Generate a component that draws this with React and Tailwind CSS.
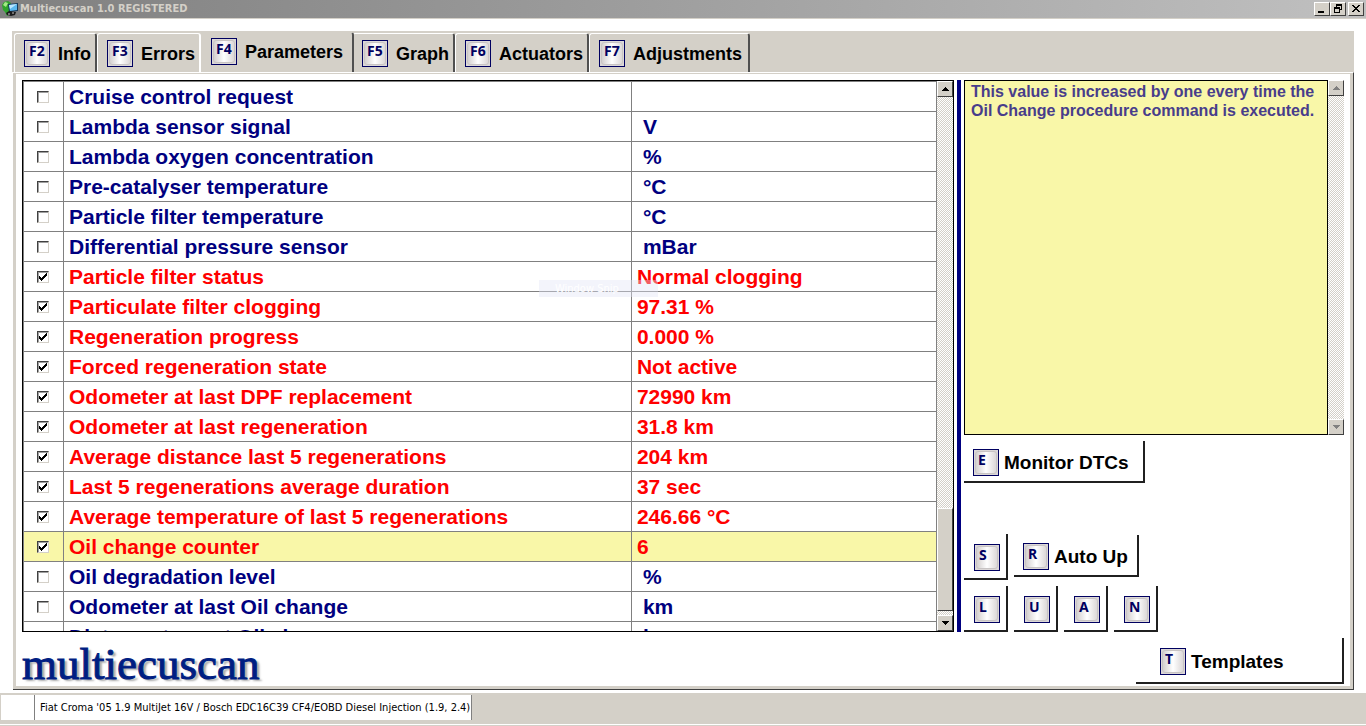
import React, { useState } from 'react';
import clsx from 'clsx';

const TABS = [
  { id: 'F2', label: 'Info', width: 'w-[83px]' },
  { id: 'F3', label: 'Errors', width: 'w-[104px]' },
  { id: 'F4', label: 'Parameters', width: 'w-[153px]' },
  { id: 'F5', label: 'Graph', width: 'w-[103px]' },
  { id: 'F6', label: 'Actuators', width: 'w-[134px]' },
  { id: 'F7', label: 'Adjustments', width: 'w-[161px]' },
];

const PARAMETERS = [
  { name: 'Cruise control request', value: '', on: false },
  { name: 'Lambda sensor signal', value: 'V', on: false },
  { name: 'Lambda oxygen concentration', value: '%', on: false },
  { name: 'Pre-catalyser temperature', value: '°C', on: false },
  { name: 'Particle filter temperature', value: '°C', on: false },
  { name: 'Differential pressure sensor', value: 'mBar', on: false },
  { name: 'Particle filter status', value: 'Normal clogging', on: true },
  { name: 'Particulate filter clogging', value: '97.31 %', on: true },
  { name: 'Regeneration progress', value: '0.000 %', on: true },
  { name: 'Forced regeneration state', value: 'Not active', on: true },
  { name: 'Odometer at last DPF replacement', value: '72990 km', on: true },
  { name: 'Odometer at last regeneration', value: '31.8 km', on: true },
  { name: 'Average distance last 5 regenerations', value: '204 km', on: true },
  { name: 'Last 5 regenerations average duration', value: '37 sec', on: true },
  { name: 'Average temperature of last 5 regenerations', value: '246.66 °C', on: true },
  { name: 'Oil change counter', value: '6', on: true },
  { name: 'Oil degradation level', value: '%', on: false },
  { name: 'Odometer at last Oil change', value: 'km', on: false },
  { name: 'Distance to next Oil change', value: 'km', on: false },
];

const raised = 'bg-[#d4d0c8] border border-t-white border-l-white border-r-[#404040] border-b-[#404040]';

const KeyCap = ({ children }) => (
  <span className='block h-[27px] w-[26px] shrink-0 border border-[#000060] bg-[#dcd8d8] p-px text-left font-["Noto_Sans",sans-serif] font-bold text-[#000060]'>
    <span className="block h-full rounded-[3px] border border-[#c8c4c4] bg-linear-to-r from-[#d4d0d0] via-white to-[#dcd8d8] pl-[2px] text-[14px] leading-[15px]">
      {children}
    </span>
  </span>
);

const ActionButton = ({ hotkey, label, className }) => (
  <button
    type="button"
    aria-label={label || hotkey}
    className={clsx(
      'flex items-center border-r-2 border-b-2 border-[#202020] bg-white pt-[3px] text-[19px] leading-6 font-bold text-black',
      className,
    )}
  >
    <KeyCap>{hotkey}</KeyCap>
    {label && <span className="ml-[5px] whitespace-nowrap">{label}</span>}
  </button>
);

const Arrow = ({ up, color }) => (
  <svg viewBox="0 0 7 4" className="h-1 w-[7px]" shapeRendering="crispEdges" aria-hidden="true">
    <path d={up ? 'M3 0h1v1h1v1h1v1h1v1H0V3h1V2h1V1h1z' : 'M0 0h7v1H6v1H5v1H4v1H3V3H2V2H1V1H0z'} fill={color} />
  </svg>
);

const ScrollBar = ({ thumb, disabled }) => {
  const color = disabled ? '#808080' : '#000';
  return (
    <div className="flex w-4 shrink-0 flex-col bg-[repeating-conic-gradient(#d4d0c8_0_25%,#fff_0_50%)] bg-[length:2px_2px]">
      <button type="button" aria-label="Scroll up" disabled={disabled} className={clsx('flex h-4 items-center justify-center', raised)}>
        <Arrow up color={color} />
      </button>
      <div className="flex flex-1 flex-col justify-end">{thumb && <div className={clsx('mb-1 h-[103px]', raised)} />}</div>
      <button type="button" aria-label="Scroll down" disabled={disabled} className={clsx('flex h-4 items-center justify-center', raised)}>
        <Arrow color={color} />
      </button>
    </div>
  );
};

const TitleBar = () => (
  <header className="flex h-[19px] shrink-0 items-center border-b border-[#d4d0c8] bg-linear-to-r from-[#808080] to-[#c0c0c0] pl-[2px]">
    <svg viewBox="0 0 16 16" className="h-4 w-4" aria-hidden="true">
      <path d="M0 4l2-3 4-1 3 2-2 6 1 5-3 2-2-4-2-2z" fill="#2fa32c" />
      <path d="M1 4l2-3 3 1-2 4z" fill="#a5e887" />
      <path d="M6 3l10-1v8l-9 1z" fill="#173a5c" />
      <path d="M7 4l8-1v6l-7 1z" fill="#5bb8f0" />
      <path d="M7 4l8-1-7 5z" fill="#b9e6ff" />
      <path d="M4 12l3-2 7 1-1 3-4 1-4-1z" fill="#1b1b1b" />
      <path d="M6 13h2M10 12h2" stroke="#c8c8c8" />
    </svg>
    <h1 className='ml-[2px] flex-1 font-["DejaVu_Sans_Condensed","DejaVu_Sans",sans-serif] text-[11px] leading-4 font-bold text-[#d4d0c8]'>
      Multiecuscan 1.0 REGISTERED
    </h1>
    <div className="flex pr-[2px]">
      <button type="button" aria-label="Minimize" className={clsx('h-[14px] w-4', raised)}>
        <svg viewBox="0 0 14 12" shapeRendering="crispEdges">
          <path d="M3 8h6v2H3z" />
        </svg>
      </button>
      <button type="button" aria-label="Restore" className={clsx('h-[14px] w-4', raised)}>
        <svg viewBox="0 0 14 12" shapeRendering="crispEdges">
          <path d="M5 1h6v6H9V6h1V3H6v1H5zM3 4h6v6H3zM4 6v3h4V6z" fillRule="evenodd" />
        </svg>
      </button>
      <button type="button" aria-label="Close" className={clsx('ml-[2px] h-[14px] w-4', raised)}>
        <svg viewBox="0 0 14 12" shapeRendering="crispEdges">
          <path d="M3 2h2v1h1v1h2V3h1V2h2v1h-1v1H9v1H8v1h1v1h1v1h1v1H9V8H8V7H6v1H5v1H3V8h1V7h1V6h1V5H5V4H4V3H3z" />
        </svg>
      </button>
    </div>
  </header>
);

const CheckBox = ({ label, checked, onChange }) => (
  <span className="relative ml-[13px] block h-3 w-3">
    <input
      type="checkbox"
      aria-label={label}
      checked={checked}
      onChange={onChange}
      className="block h-3 w-3 appearance-none border border-t-[#404040] border-r-[#d4d0c8] border-b-[#d4d0c8] border-l-[#404040] bg-white shadow-[inset_1px_1px_0_#a0a0a0]"
    />
    {checked && (
      <svg viewBox="0 0 12 12" className="pointer-events-none absolute inset-0 h-3 w-3" shapeRendering="crispEdges" aria-hidden="true">
        <path d="M2 5h1v1h1v1h1V6h1V5h1V4h1V3h1V2h1v3H9v1H8v1H7v1H6v1H5v1H4V9H3V8H2z" />
      </svg>
    )}
  </span>
);

const App = () => {
  const [activeTab, setActiveTab] = useState('F4');
  const [selected, setSelected] = useState(15);
  const [rows, setRows] = useState(PARAMETERS);

  const toggle = (index) => setRows(rows.map((row, i) => (i === index ? { ...row, on: !row.on } : row)));

  return (
    <div className='flex h-screen flex-col overflow-hidden bg-white font-["Liberation_Sans",Arial,sans-serif]'>
      <TitleBar />

      <main className="mx-3 mt-3 mb-[3px] flex min-h-0 flex-1 flex-col">
        {/* Tabs */}
        <div role="tablist" className="flex h-[41px] shrink-0 items-end bg-[#d4d0c8] pl-[2px]">
          {TABS.map((tab) => {
            const active = tab.id === activeTab;
            return (
              <button
                key={tab.id}
                type="button"
                role="tab"
                aria-selected={active}
                onClick={() => setActiveTab(tab.id)}
                className={clsx(
                  'flex items-start gap-2 rounded-t-[3px] border-t border-r-2 border-l bg-[#d4d0c8] pl-[9px] text-[18px] leading-[28px] font-bold whitespace-nowrap text-black',
                  tab.width,
                  active
                    ? 'relative z-10 -mr-[2px] h-10 border-t-[#d4d0c8] border-r-[#505050] border-l-[#d4d0c8] pt-[5px]'
                    : 'h-[39px] border-t-white border-l-white pt-[6px]',
                  tab.id === 'F3' ? 'border-r-white' : 'border-r-[#505050]',
                )}
              >
                <KeyCap>{tab.id}</KeyCap>
                <span>{tab.label}</span>
              </button>
            );
          })}
        </div>

        {/* Parameters page */}
        <section className="ml-px flex min-h-0 flex-1 flex-col border-t border-r border-b border-t-white border-r-[#404040] border-b-[#404040]">
          <div className="flex min-h-0 flex-1 flex-col border-t border-r-[3px] border-b-[3px] border-l-[3px] border-[#d4d0c8] px-[6px] pt-[6px]">
            <div className="flex min-h-0 flex-1 gap-[3px]">
              <div className="flex min-w-0 flex-1 overflow-hidden border border-black">
                <div className="min-w-0 flex-1 overflow-hidden">
                  <table className="w-full table-fixed border-collapse text-[21px] leading-[27px] font-bold whitespace-nowrap">
                    <colgroup>
                      <col className="w-10" />
                      <col className="w-[62.2%]" />
                      <col />
                    </colgroup>
                    <tbody>
                      {rows.map((row, i) => (
                        <tr
                          key={row.name}
                          onClick={() => setSelected(i)}
                          className={clsx(row.on ? 'text-[#ff0000]' : 'text-[#000080]', i === selected && 'bg-[#f9f7a8]')}
                        >
                          <td className="border border-[#808080] p-0">
                            <CheckBox label={row.name} checked={row.on} onChange={() => toggle(i)} />
                          </td>
                          <td className="h-[30px] border border-[#808080] py-px pr-0 pl-[5px]">{row.name}</td>
                          <td className={clsx('border border-[#808080] py-px pr-0', row.on ? 'pl-[5px]' : 'pl-[11px]')}>{row.value}</td>
                        </tr>
                      ))}
                    </tbody>
                  </table>
                </div>
                <ScrollBar thumb />
              </div>

              <div className="w-1 shrink-0 bg-[#000080]" />

              <aside className="flex w-[380px] shrink-0 flex-col">
                <div className="flex min-h-0 flex-1">
                  <p className="flex-1 border border-black bg-[#f9f7a8] px-[6px] pt-px text-[16px] leading-[19px] font-bold text-[#483d8b]">
                    This value is increased by one every time the Oil Change procedure command is executed.
                  </p>
                  <ScrollBar disabled />
                </div>
                <div className="mt-[6px] flex">
                  <ActionButton hotkey="E" label="Monitor DTCs" className="h-[42px] w-[181px] pl-[9px]" />
                </div>
                <div className="mt-[51px] flex gap-[6px]">
                  <ActionButton hotkey="S" className="h-[46px] w-11 pl-[10px]" />
                  <ActionButton hotkey="R" label="Auto Up" className="mt-px h-[42px] w-[125px] pl-[9px]" />
                </div>
                <div className="mt-[6px] flex gap-[6px]">
                  {['L', 'U', 'A', 'N'].map((hotkey) => (
                    <ActionButton key={hotkey} hotkey={hotkey} className="h-[46px] w-11 pl-[10px]" />
                  ))}
                </div>
              </aside>
            </div>

            <div className="flex h-[54px] shrink-0 items-start justify-between pt-[6px]">
              <p className='font-["Liberation_Serif",serif] text-[45px] leading-[52px] text-[#001e82] [-webkit-text-stroke:1px_#001e82] [text-shadow:3px_2px_2px_#aaa]'>
                multiecuscan
              </p>
              <ActionButton hotkey="T" label="Templates" className="h-[46px] w-[208px] pl-6" />
            </div>
          </div>
        </section>
      </main>

      {/* Status bar */}
      <footer className="h-[33px] shrink-0 bg-[#d4d0c8] pt-[2px] pl-px">
        <div className='flex h-[25px] font-["DejaVu_Sans_Condensed","DejaVu_Sans",sans-serif] text-[11px] leading-[26px] text-black'>
          <span className="w-[34px] border-r border-[#808080] bg-white" />
          <span className="border-r border-[#808080] bg-white pr-px pl-[5px] whitespace-nowrap">
            Fiat Croma '05 1.9 MultiJet 16V / Bosch EDC16C39 CF4/EOBD Diesel Injection (1.9, 2.4)
          </span>
        </div>
        <div className="mt-1 -ml-px h-px bg-white" />
      </footer>

      <div className='absolute top-[280px] left-[539px] h-[17px] w-[119px] bg-[#e0e4f4]/40 pl-4 font-["DejaVu_Sans_Condensed","DejaVu_Sans",sans-serif] text-[11px] leading-[17px] text-white'>
        Window Snip
      </div>
    </div>
  );
};

export default App;
